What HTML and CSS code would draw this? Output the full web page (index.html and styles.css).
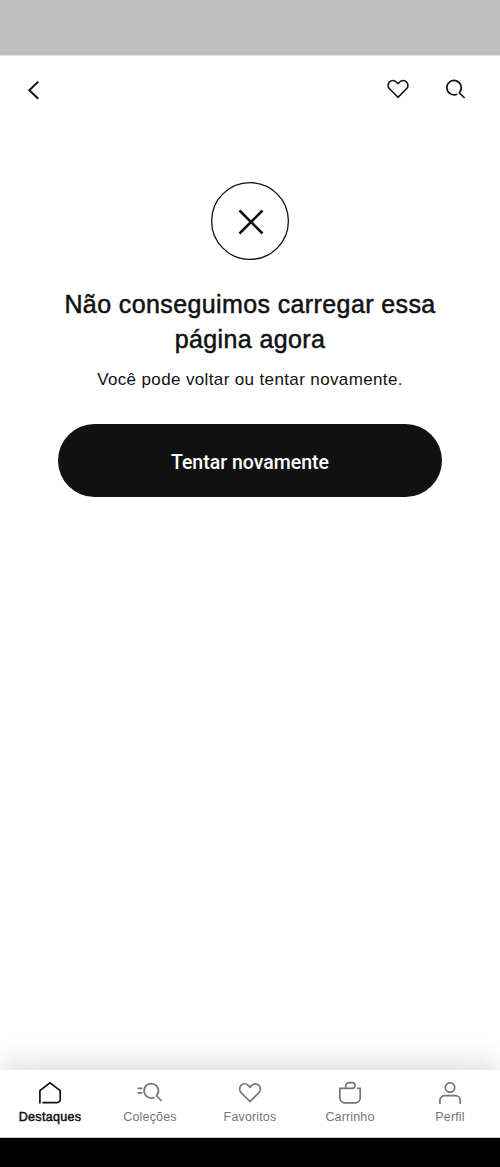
FILE: index.html
```html
<!DOCTYPE html>
<html lang="pt-BR">
<head>
    <meta charset="UTF-8">
    <meta name="viewport" content="width=device-width, initial-scale=1.0">
    <title>Destaques</title>
    <link rel="stylesheet" href="styles.css">
</head>
<body>
    <div class="status-bar"></div>
    <header>
        <button class="icon-button back" aria-label="Voltar">
            <svg width="24" height="24" viewBox="0 0 24 24"><path d="M18.3 4.6 9.3 13.2l9 8.6"/></svg>
        </button>
        <button class="icon-button" aria-label="Favoritos">
            <svg width="24" height="24" viewBox="0 0 24 24"><path d="M12 20.3 3.5 11.8a4.8 4.8 0 0 1 0-6.8c1.9-1.9 4.9-1.9 6.8 0L12 6.7l1.7-1.7c1.9-1.9 4.9-1.9 6.8 0a4.8 4.8 0 0 1 0 6.8z"/></svg>
        </button>
        <button class="icon-button" aria-label="Buscar">
            <svg width="24" height="24" viewBox="0 0 24 24"><path d="M13.3 17.1A7.2 7.2 0 1 1 15.4 15.5V15.9L20.6 21"/></svg>
        </button>
    </header>
    <main>
        <svg class="error-icon" width="80" height="80" viewBox="0 0 80 80">
            <circle cx="40" cy="40" r="38.4"/>
            <path d="M29.5 29.5 52.5 52.5M52.5 29.5 29.5 52.5"/>
        </svg>
        <h1>Não conseguimos carregar essa<br>página agora</h1>
        <p>Você pode voltar ou tentar novamente.</p>
        <button class="retry">Tentar novamente</button>
    </main>
    <nav>
        <a class="active">
            <svg width="26" height="26" viewBox="0 0 26 26"><path d="M2.9 23.6V10.6L13 2.9l10.2 7.7v9a3 3 0 0 1-3 3H5.4"/></svg>
            Destaques
        </a>
        <a>
            <svg width="26" height="26" viewBox="0 0 26 26"><path d="M17.5 17.2A7.2 7.2 0 1 1 19.6 15.6V16L24.7 21M.6 8.4h4.8M.6 12.9h4.8"/></svg>
            Coleções
        </a>
        <a>
            <svg width="26" height="26" viewBox="0 0 26 26"><path d="M13 21.5 4.1 12.6a5.1 5.1 0 0 1 0-7.2c2-2 5.1-2 7.1 0L13 7.2l1.8-1.8c2-2 5.1-2 7.1 0a5.1 5.1 0 0 1 0 7.2z"/></svg>
            Favoritos
        </a>
        <a>
            <svg width="26" height="26" viewBox="0 0 26 26"><path d="M8.7 8.3V6.2a3.5 3.5 0 0 1 3.5-3.5h3a2.8 2.8 0 0 1 2.8 2.8 2.8 2.8 0 0 1-2.8 2.8H2.9v9.8a4.8 4.8 0 0 0 4.8 4.8h10.7a4.8 4.8 0 0 0 4.8-4.8V8.3H19.8"/></svg>
            Carrinho
        </a>
        <a>
            <svg width="26" height="26" viewBox="0 0 26 26"><circle cx="13" cy="7.5" r="4.7"/><path d="M2.9 24v-3.4a4.9 4.9 0 0 1 4.9-4.9h10.5a4.9 4.9 0 0 1 4.9 4.9V24"/></svg>
            Perfil
        </a>
    </nav>
    <div class="system-bar"></div>
</body>
</html>
```
FILE: styles.css
```css
* { box-sizing: border-box; }
body { margin: 0; height: 1167px; display: flex; flex-direction: column; background: #fff; color: #111; font-family: "Liberation Sans", Arial, sans-serif; }
button { border: 0; cursor: pointer; }
svg { display: block; fill: none; stroke: currentColor; stroke-width: 1.6; }

.status-bar { height: 56px; background: #bfbfbf; border-bottom: 1px solid #e4e4e4; flex-shrink: 0; }
.system-bar { height: 29px; background: #000; flex-shrink: 0; }

header { display: flex; align-items: center; height: 66px; padding: 0 32px 0 20px; gap: 34px; flex-shrink: 0; }
.icon-button { padding: 0; background: none; color: #111; }
.back { margin-right: auto; }
.back svg { stroke-width: 2; }

main { flex: 1; display: flex; flex-direction: column; align-items: center; padding: 59px 58px 0; text-align: center; }
.error-icon { stroke-width: 1.3; }
.error-icon path { stroke-width: 2.6; }
h1 { margin: 26px 0 0; font-size: 25px; font-weight: 400; line-height: 35px; letter-spacing: 0.39px; white-space: nowrap; -webkit-text-stroke: 0.5px #111; }
p { margin: 10px 0 0; font-size: 17px; line-height: 26px; letter-spacing: 0.37px; }
.retry { width: 384px; height: 73px; margin-top: 31px; padding: 4px 0 0; border-radius: 37px; background: #111; color: #fff; font: 500 19.5px Roboto, sans-serif; }

nav { display: flex; height: 68px; background: #fff; border-bottom: 1px solid #c8c8c8; box-shadow: 0 -4px 32px rgba(0, 0, 0, 0.16); flex-shrink: 0; }
nav a { flex: 1; display: flex; flex-direction: column; align-items: center; gap: 3px; padding-top: 10px; color: #757575; font-size: 12.5px; line-height: 16px; letter-spacing: 0.15px; }
nav svg { stroke-width: 1.7; }
nav .active { color: #111; letter-spacing: 0.3px; -webkit-text-stroke: 0.5px #111; }
```
